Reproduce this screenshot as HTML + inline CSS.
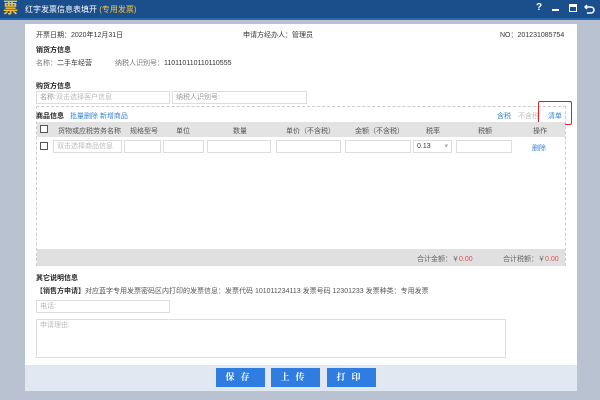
<!DOCTYPE html>
<html><head><meta charset="utf-8"><style>
*{margin:0;padding:0;box-sizing:border-box}
body{width:600px;height:400px;background:#b8c2d0;font-family:"Liberation Sans","Noto Sans CJK SC",sans-serif;font-size:7px;color:#333;position:relative;overflow:hidden}
.a{position:absolute}
.top{left:0;top:0;width:600px;height:18px;background:#1b4f8c;color:#fff}
.panel{left:25px;top:24px;width:552px;height:367px;background:#fff}
.inp{position:absolute;border:1px solid #ddd;background:#fff;height:13px;color:#bbb;padding:2px 3px;font-size:7px;line-height:8px}
.b{font-weight:bold;color:#222}
.btn{position:absolute;top:368px;width:49px;height:19px;background:#2f7de1;color:#fff;font-weight:bold;font-size:9px;text-align:center;line-height:19px;letter-spacing:6px;font-family:"Liberation Serif","Noto Serif CJK SC",serif}
.cb{position:absolute;width:8px;height:8px;border:1px solid #555;background:#fff}
</style></head><body>
<div class="a top">
 <div class="a" style="left:3px;top:1px;width:16px;height:16px;color:#f5c23a;font-size:15px;font-weight:bold;line-height:16px">票</div>
 <div class="a" style="left:25px;top:4px;font-size:8px">红字发票信息表填开 <span style="color:#f5c23a">(专用发票)</span></div>
 <div class="a" style="left:536px;top:2px;font-size:10px;font-weight:bold">?</div>
 <div class="a" style="left:552px;top:9px;width:7px;height:1.5px;background:#fff"></div>
 <div class="a" style="left:569px;top:4px;width:8px;height:8px;border:1.5px solid #fff;border-top-width:3px"></div>
 <svg class="a" style="left:584px;top:3px" width="11" height="11"><path d="M3 2 L1 4 L3 6 M1 4 H7 A3 3 0 0 1 7 10 H3" stroke="#fff" stroke-width="1.5" fill="none"/></svg>
</div>
<div class="a" style="left:0;top:18px;width:600px;height:2px;background:#2d6bb0"></div>
<div class="a panel"></div>
<div class="a" style="left:36px;top:30px">开票日期：2020年12月31日</div>
<div class="a" style="left:243px;top:30px">申请方经办人：管理员</div>
<div class="a" style="left:500px;top:30px">NO：201231085754</div>
<div class="a b" style="left:36px;top:45px">销货方信息</div>
<div class="a" style="left:36px;top:58px;color:#777">名称：<span style="color:#333">二手车经营</span></div>
<div class="a" style="left:115px;top:58px;color:#777">纳税人识别号：<span style="color:#333">110110110110110555</span></div>
<div class="a b" style="left:36px;top:81px">购货方信息</div>
<div class="inp" style="left:36px;top:91px;width:134px"><span style="color:#999">名称:</span>双击选择客户信息</div>
<div class="inp" style="left:172px;top:91px;width:135px;color:#999">纳税人识别号:</div>
<div class="a" style="left:36px;top:106px;width:530px;height:160px;border:1px dashed #ccc"></div>
<div class="a b" style="left:36px;top:111px">商品信息 <span style="color:#3a86d8;font-weight:normal;margin-left:4px">批量删除 新增商品</span></div>
<div class="a" style="left:497px;top:111px;color:#3a86d8">含税</div>
<div class="a" style="left:518px;top:111px;color:#bbb">不含税</div>
<div class="a" style="left:548px;top:111px;color:#3a86d8">清单</div>
<div class="a" style="left:538px;top:101px;width:34px;height:24px;border:1.5px solid #e02020;border-radius:2px"></div>
<div class="a" style="left:37px;top:122px;width:528px;height:15px;background:#e3e3e3"></div>
<div class="cb" style="left:40px;top:125px"></div>
<div class="a" style="top:126px;left:58px;color:#555">货物或应税劳务名称</div>
<div class="a" style="top:126px;left:130px;color:#555">规格型号</div>
<div class="a" style="top:126px;left:176px;color:#555">单位</div>
<div class="a" style="top:126px;left:233px;color:#555">数量</div>
<div class="a" style="top:126px;left:286px;color:#555">单价（不含税）</div>
<div class="a" style="top:126px;left:355px;color:#555">金额（不含税）</div>
<div class="a" style="top:126px;left:426px;color:#555">税率</div>
<div class="a" style="top:126px;left:478px;color:#555">税额</div>
<div class="a" style="top:126px;left:533px;color:#555">操作</div>
<div class="cb" style="left:40px;top:142px"></div>
<div class="inp" style="left:53px;top:140px;width:69px">双击选择商品信息</div>
<div class="inp" style="left:124px;top:140px;width:37px"></div>
<div class="inp" style="left:163px;top:140px;width:41px"></div>
<div class="inp" style="left:207px;top:140px;width:64px"></div>
<div class="inp" style="left:276px;top:140px;width:65px"></div>
<div class="inp" style="left:345px;top:140px;width:66px"></div>
<div class="inp" style="left:413px;top:140px;width:39px;color:#333">0.13 <span style="float:right;color:#aaa">▾</span></div>
<div class="inp" style="left:456px;top:140px;width:56px"></div>
<div class="a" style="left:532px;top:143px;color:#3a86d8">删除</div>
<div class="a" style="left:37px;top:249px;width:528px;height:17px;background:#e0e0e0"></div>
<div class="a" style="left:417px;top:254px;color:#666">合计金额：￥<span style="color:#e05050">0.00</span></div>
<div class="a" style="left:503px;top:254px;color:#666">合计税额：￥<span style="color:#e05050">0.00</span></div>
<div class="a b" style="left:36px;top:273px">其它说明信息</div>
<div class="a" style="left:36px;top:286px;color:#555"><b style="color:#333">【销售方申请】</b>对应蓝字专用发票密码区内打印的发票信息：发票代码 101011234113 发票号码 12301233 发票种类：专用发票</div>
<div class="inp" style="left:36px;top:300px;width:134px">电话:</div>
<div class="inp" style="left:36px;top:319px;width:470px;height:39px">申请理由:</div>
<div class="a" style="left:25px;top:365px;width:552px;height:26px;background:#e2e8f1"></div>
<div class="btn" style="left:216px">保存</div>
<div class="btn" style="left:271px">上传</div>
<div class="btn" style="left:327px">打印</div>
</body></html>
